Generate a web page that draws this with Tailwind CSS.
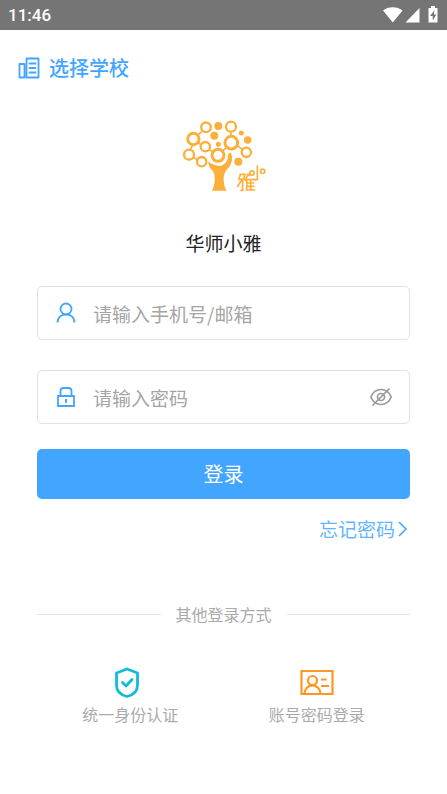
<!DOCTYPE html>
<html lang="zh-CN">
<head>
<meta charset="utf-8">
<meta name="viewport" content="width=device-width, initial-scale=1">
<title>华师小雅</title>
<script src="https://cdn.jsdelivr.net/npm/@tailwindcss/browser@4"></script>
</head>
<body class="min-h-screen bg-white font-['Noto_Sans_CJK_SC',sans-serif] font-normal text-[#222]">
<div class="flex h-[30px] items-center justify-between bg-[#757575] pl-2 pr-[7px] text-white">
  <span class="font-[Roboto,sans-serif] text-[17px] leading-5 font-medium">11:46</span>
  <svg class="h-[30px] w-[57px]" viewBox="0 0 57 30" fill="#fff" aria-hidden="true">
    <path d="M0 10.500C5 6 14.500 6 19.500 10.500L9.800 22.500Z"/>
    <path d="M36.500 8V22.500H22.500Z"/>
    <path fill-rule="evenodd" d="M48 6h4v2h2.500v14.500h-9V8H48ZM51.500 10l-4.500 6h2.700v4.500l3.800-6h-2.700Z"/>
  </svg>
</div>
<header class="px-[18px] pt-[23px]">
  <button type="button" class="flex items-center gap-[9px] text-[#42a5ff]">
    <svg class="size-[22px]" viewBox="0 0 22 22" fill="none" stroke="currentColor" stroke-width="1.800" stroke-linejoin="round" stroke-linecap="round" aria-hidden="true">
      <path d="M8.500 1.500H20.500V20.500H8.500ZM6.500 7H1.500V20.500H6.500ZM11.500 6.500H17.500M11.500 11H17.500M11.500 15.500H17.500"/>
    </svg>
    <span class="text-[20px] leading-[30px] font-medium">选择学校</span>
  </button>
</header>
<main class="px-[37px]">
  <svg class="mx-auto mt-[27px] h-[90px] w-[110px]" viewBox="-3 0 330 270" fill="none" stroke="#fbb03b" role="img" aria-label="华师小雅">
    <g stroke-width="5">
      <path d="M82 77L95 64M67 106L61 120M82 97L94 104M69 141L81 149M118 119L131 127M158 122L169 114M183 66V78M203 108L217 118"/>
    </g>
    <g stroke-width="7">
      <circle cx="108" cy="52" r="14.500"/><circle cx="183" cy="50" r="15"/>
      <circle cx="106" cy="110" r="14"/><circle cx="57" cy="134" r="15"/>
      <circle cx="95" cy="155" r="14"/><circle cx="229" cy="127" r="14"/>
    </g>
    <g stroke-width="9">
      <circle cx="70" cy="87" r="17"/><circle cx="144" cy="136" r="18"/><circle cx="184" cy="98" r="19"/>
    </g>
    <g fill="#fbb03b" stroke="none">
      <circle cx="145" cy="48" r="12"/><circle cx="133" cy="77" r="12"/>
      <circle cx="145" cy="103" r="7.500"/><circle cx="214" cy="69" r="7.500"/>
      <circle cx="233" cy="90" r="11.500"/><circle cx="205" cy="155" r="12"/>
      <path d="M114 155Q137 168 152 168Q175 158 174 137Q175 127 181 128Q186 129 186 149Q184 165 172 177Q160 190 161 209Q162 231 170 242H126Q135 225 134 203Q134 187 125 179Q117 172 114 155Z"/>
    </g>
    <g stroke-width="5">
      <path d="M209 193H225L220 208M211 193L207 208H228M218 208V241H211M215 211L201 231M235 190L225 212M230 208V241M230 209H262V166M230 219H253M230 229H253M227 240H255M242 208V240M235 190L239 199"/>
      <circle cx="246" cy="189" r="6.500"/>
      <circle cx="278" cy="184" r="6.500"/>
    </g>
  </svg>
  <h1 class="mt-7 text-center text-[19px] leading-[30px] font-normal">华师小雅</h1>
  <form class="mt-7">
    <div class="flex h-[54px] items-center gap-4 rounded-[5px] border border-[#dfe1eb] px-[17px]">
      <label for="account" class="text-[#42a5ff]">
        <svg class="size-[22px]" viewBox="0 0 22 22" fill="none" stroke="currentColor" stroke-width="1.800" role="img" aria-label="账号"><circle cx="11" cy="7" r="5.500"/><path d="M2.500 20.500C2.500 9.700 19.500 9.700 19.500 20.500"/></svg>
      </label>
      <input id="account" type="text" placeholder="请输入手机号/邮箱" class="h-10 min-w-0 flex-1 text-[19px] outline-none placeholder:text-[#a5a5a5]">
    </div>
    <div class="mt-[30px] flex h-[54px] items-center gap-4 rounded-[5px] border border-[#dfe1eb] px-[17px]">
      <label for="password" class="text-[#42a5ff]">
        <svg class="size-[22px]" viewBox="0 0 22 22" fill="none" stroke="currentColor" stroke-width="1.800" role="img" aria-label="密码"><path d="M3 10H19V20H3ZM5.500 10V5Q5.500 2 8.500 2H13.500Q16.500 2 16.500 5V10M11 13.500V17"/><path d="M10 14H12"/></svg>
      </label>
      <input id="password" type="password" placeholder="请输入密码" class="h-10 min-w-0 flex-1 text-[19px] outline-none placeholder:text-[#a5a5a5]">
      <button type="button" aria-label="显示密码" class="text-[#999]">
        <svg class="size-[22px]" viewBox="0 0 22 22" fill="none" stroke="currentColor" stroke-width="1.700" stroke-linecap="round"><path d="M.8 11Q4 3.500 11 3.500T21.200 11Q18 18.500 11 18.500T.8 11ZM3 19L19 3"/><circle cx="11" cy="11" r="3.500"/></svg>
      </button>
    </div>
    <button type="submit" class="mt-[25px] h-[50px] w-full rounded-[5px] bg-[#42a5ff] text-[20px] text-white">登录</button>
  </form>
  <div class="mt-[15px] flex justify-end">
    <a href="#" class="flex items-center text-[19px] leading-[30px] text-[#64b5ff]">忘记密码<svg class="h-4 w-[15px]" viewBox="0 0 15 16" fill="none" stroke="#42a5ff" stroke-width="1.500" aria-hidden="true"><path d="M4 1L11 8L4 15"/></svg></a>
  </div>
  <section>
    <div class="mt-[58px] flex items-center gap-[15px]">
      <span class="h-px flex-1 bg-[#e5e5e5]"></span>
      <h2 class="text-[16px] leading-6 font-normal text-[#aaa]">其他登录方式</h2>
      <span class="h-px flex-1 bg-[#e5e5e5]"></span>
    </div>
    <div class="mt-10 grid grid-cols-2 text-[16px] leading-6 text-[#aaa]">
      <a href="#" class="flex flex-col items-center">
        <svg class="h-9 w-10" viewBox="0 0 40 36" fill="none" stroke="#12bcd8" stroke-width="2.800" stroke-linejoin="round" stroke-linecap="round" aria-hidden="true"><path d="M17 3L27.500 7V19Q27.500 28 17 30.500Q6.500 28 6.500 19V7Z"/><path d="M12.500 16.500L16 20L22 13.500"/></svg>
        <span>统一身份认证</span>
      </a>
      <a href="#" class="flex flex-col items-center">
        <svg class="h-9 w-10" viewBox="0 0 40 36" fill="none" stroke="#ff9727" stroke-width="2.200" aria-hidden="true"><path d="M4.500 5H35.500V28H4.500ZM24 13.500H29.500M24 20H32"/><circle cx="15.500" cy="14.500" r="4.500"/><path d="M7.500 28C8 16.500 23 16.500 23.500 28"/></svg>
        <span>账号密码登录</span>
      </a>
    </div>
  </section>
</main>
</body>
</html>
